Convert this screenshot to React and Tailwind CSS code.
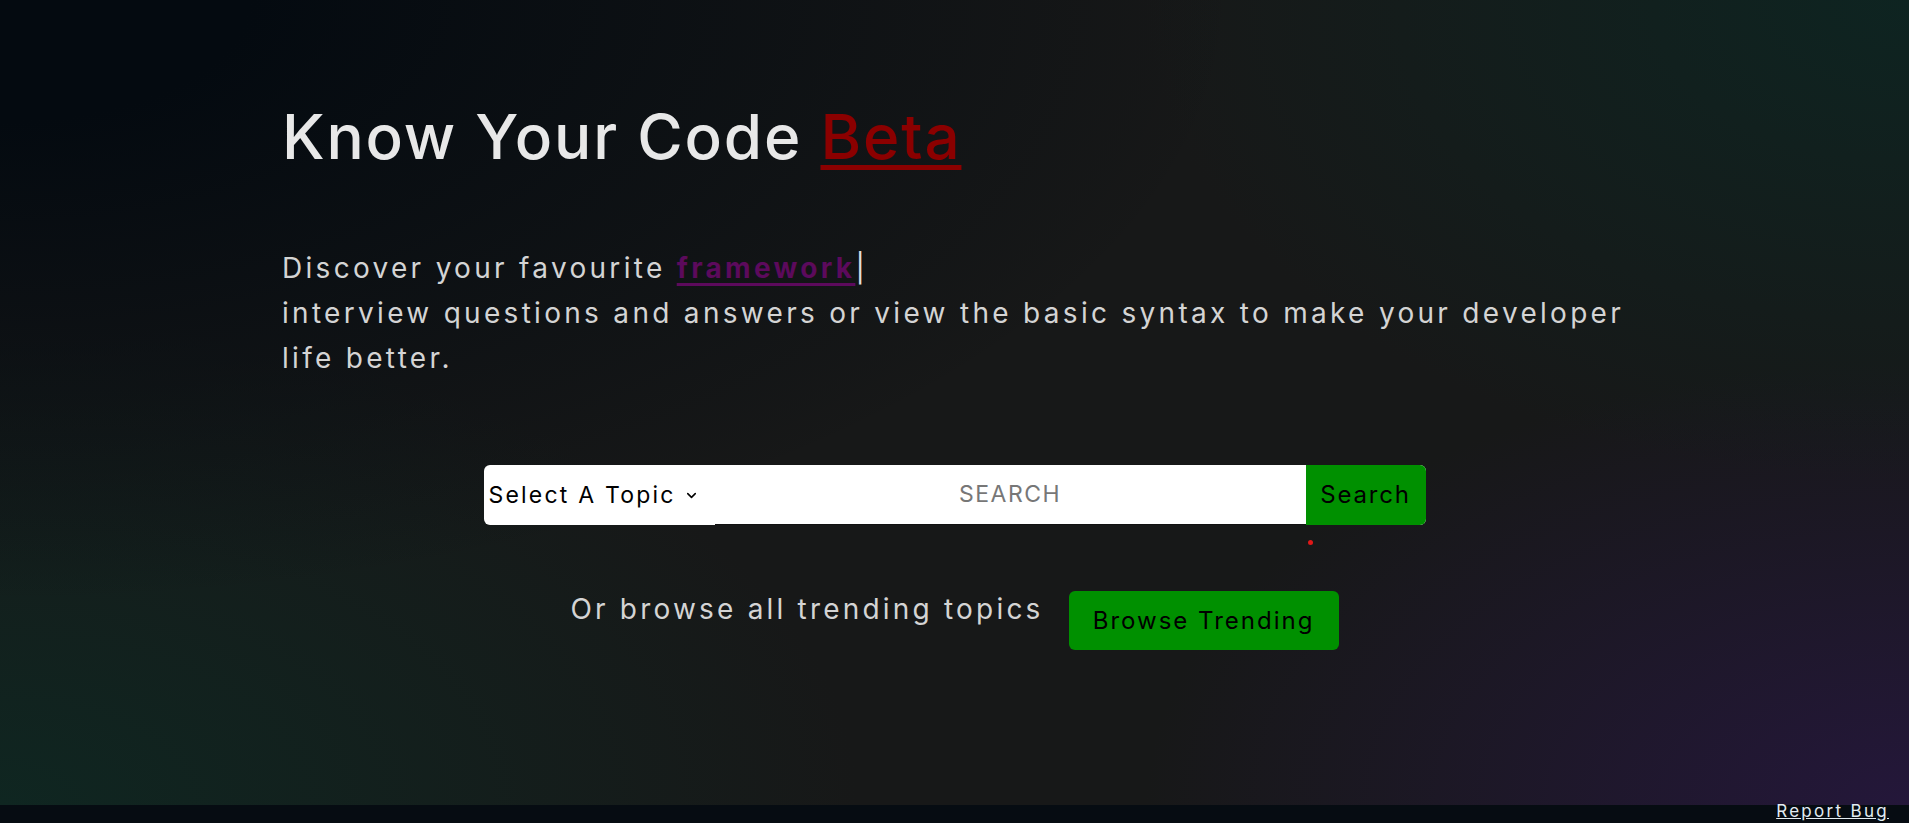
import React from "react";
import { ChevronDown } from "lucide-react";

export default function App() {
  return (
    <div className="flex h-[823px] flex-col font-['Inter','Noto_Sans',sans-serif]">
      {/* HERO */}
      <main className="flex-1 bg-[#171818] bg-[image:radial-gradient(ellipse_65%_75%_at_0%_0%,#040a10_0%,#040a10_20%,transparent_100%),radial-gradient(ellipse_40%_60%_at_100%_0%,#0e2421_0%,transparent_100%),radial-gradient(ellipse_45%_60%_at_0%_100%,#0f2621_0%,transparent_100%),radial-gradient(ellipse_40%_55%_at_100%_100%,#24173a_0%,transparent_100%)]">
        <div className="mx-auto w-[1345px] pt-[106px]">
          <h1 className="text-[62px] font-medium leading-none tracking-[1.8px] text-[#e8e8e8]">
            Know Your Code{" "}
            <a href="#" className="text-[#8b0000] underline decoration-[5px] underline-offset-[6px]">
              Beta
            </a>
          </h1>

          <p className="mt-[78px] text-[28px] leading-[45px] tracking-[3.3px] text-[#d4d4d4]">
            Discover your favourite{" "}
            <span className="font-bold text-[#5c0a5c] underline decoration-[3px] underline-offset-[5px]">
              framework
            </span>
            <span className="text-[#e0e0e0]">|</span>
            <br />
            interview questions and answers or view the basic syntax to make your developer life better.
          </p>
        </div>

        {/* SEARCH BAR */}
        <div className="mx-auto mt-[84px] flex h-[60px] w-[942px] overflow-hidden rounded-md bg-white">
          <button className="flex items-center gap-[8px] pl-[5px] pr-4 text-[23px] tracking-[2.2px] text-black">
            Select A Topic
            <ChevronDown className="h-[15px] w-[15px]" strokeWidth={2.5} />
          </button>
          <input
            placeholder="SEARCH"
            className="min-w-0 flex-1 border-b border-[#111] bg-white text-center text-[23px] tracking-[1.5px] text-black outline-none placeholder:text-[#777]"
          />
          <button className="w-[120px] bg-[#009000] text-[24px] tracking-[1.8px] text-black">
            Search
          </button>
        </div>

        <div className="mx-auto mt-[15px] flex w-[942px] pl-[824px]">
          <span className="h-[5px] w-[5px] rounded-full bg-[#e01818]" />
        </div>

        {/* BROWSE ROW */}
        <div className="mt-[46px] flex items-start justify-center gap-[25px]">
          <span className="text-[28px] leading-[36px] tracking-[3.2px] text-[#d4d4d4]">
            Or browse all trending topics
          </span>
          <button className="h-[59px] w-[270px] rounded-md bg-[#009000] text-[24px] tracking-[2px] text-black">
            Browse Trending
          </button>
        </div>
      </main>

      {/* FOOTER */}
      <footer className="flex h-[18px] justify-end bg-[#060c12] pr-[20px]">
        <a href="#" className="-mt-[5px] text-[17px] leading-[22px] tracking-[2.3px] text-[#e2ecf2] underline">
          Report Bug
        </a>
      </footer>
    </div>
  );
}
